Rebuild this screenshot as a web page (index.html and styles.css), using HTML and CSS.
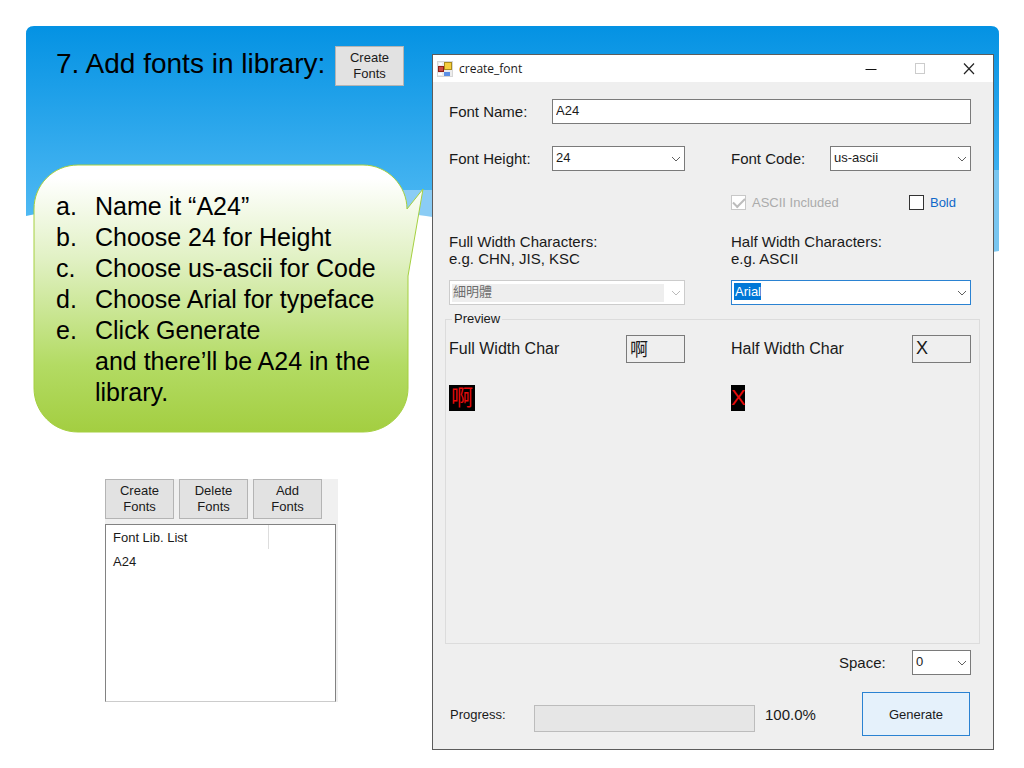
FILE: index.html
```html
<!DOCTYPE html>
<html lang="en">
<head>
<meta charset="utf-8">
<title>Add fonts in library</title>
<link rel="stylesheet" href="styles.css">
</head>
<body>
<main class="slide">
  <svg class="backdrop" viewBox="0 0 974 228" preserveAspectRatio="none" aria-hidden="true">
    <defs>
      <linearGradient id="sky" x1="0" y1="0" x2="0" y2="1">
        <stop offset="0" stop-color="#0492e3"/>
        <stop offset="1" stop-color="#5cc0f6"/>
      </linearGradient>
    </defs>
    <path fill="url(#sky)" d="M9 1H966Q974 1 974 9V226Q880 228 700 215Q480 165 300 165Q120 165 1 191V9Q1 1 9 1Z"/>
    <path fill="#8accf5" d="M374 165H430V196Q400 190 374 188Z"/>
    <path fill="#79c6f0" d="M960 145H974V226L960 228Z"/>
  </svg>

  <section class="notes">
    <header class="heading">
      <h1>7. Add fonts in library:</h1>
      <button class="tool" type="button">Create<br>Fonts</button>
    </header>

    <div class="callout">
      <svg class="bubble" viewBox="0 0 392 269" preserveAspectRatio="none" aria-hidden="true">
        <defs>
          <linearGradient id="leaf" x1="0" y1="0" x2="0" y2="1">
            <stop offset="0.05" stop-color="#ffffff"/>
            <stop offset="0.35" stop-color="#e1f1c4"/>
            <stop offset="0.75" stop-color="#b3db63"/>
            <stop offset="1" stop-color="#a3ce41"/>
          </linearGradient>
        </defs>
        <path fill="url(#leaf)" stroke="#a5d040" d="M45 1H330C355 1 374 22 374 45L390 25L375 112V224C375 248 355 268 330 268H45C20 268 1 248 1 224V45C1 21 20 1 45 1Z"/>
      </svg>
      <ol class="steps">
        <li>Name it “A24”</li>
        <li>Choose 24 for Height</li>
        <li>Choose us-ascii for Code</li>
        <li>Choose Arial for typeface</li>
        <li>Click Generate<br>and there’ll be A24 in the library.</li>
      </ol>
    </div>

    <div class="library">
      <div class="tools">
        <button class="tool" type="button">Create<br>Fonts</button>
        <button class="tool" type="button">Delete<br>Fonts</button>
        <button class="tool" type="button">Add<br>Fonts</button>
      </div>
      <div class="list">
        <table>
          <thead><tr><th scope="col">Font Lib. List</th><td></td></tr></thead>
          <tbody><tr><td>A24</td><td></td></tr></tbody>
        </table>
      </div>
    </div>
  </section>

  <form class="dialog">
    <header class="titlebar">
      <svg class="appicon" viewBox="0 0 16 16" aria-hidden="true">
        <rect x="0.500" y="0.500" width="15" height="15" fill="#ececec" stroke="#d6d6d6"/>
        <rect x="1.500" y="5.500" width="5" height="5" fill="#cc4a42" stroke="#8f1d18"/>
        <rect x="7.500" y="1.500" width="7" height="7" fill="#f6ce3c" stroke="#a98a1c"/>
        <rect x="7" y="11" width="6" height="4" fill="#5b8fe6"/>
        <path d="M1 14H5V12H1ZM2 2H5V4H2Z" fill="#fff"/>
      </svg>
      <h2>create_font</h2>
      <button type="button" class="winbtn" aria-label="Minimize"><svg viewBox="0 0 12 12"><path d="M0.500 6.500H11.500" stroke="#111"/></svg></button>
      <button type="button" class="winbtn" aria-label="Maximize" disabled><svg viewBox="0 0 12 12"><rect x="1.500" y="0.500" width="9" height="10" fill="none" stroke="#ccc"/></svg></button>
      <button type="button" class="winbtn" aria-label="Close"><svg viewBox="0 0 12 12"><path d="M1 0.500L11 11M11 0.500L1 11" stroke="#222" stroke-width="1.200"/></svg></button>
    </header>

    <div class="fields">
      <label for="name">Font Name:</label>
      <input class="box wide" id="name" type="text" value="A24">

      <label for="height">Font Height:</label>
      <span class="combo">
        <select class="box" id="height"><option>24</option></select>
        <svg viewBox="0 0 10 6"><path d="M1 1L5 5L9 1"/></svg>
      </span>
      <label class="second" for="code">Font Code:</label>
      <span class="combo">
        <select class="box" id="code"><option>us-ascii</option></select>
        <svg viewBox="0 0 10 6"><path d="M1 1L5 5L9 1"/></svg>
      </span>
    </div>

    <div class="halves checks">
      <div class="split">
        <label class="check off"><input type="checkbox" checked disabled>ASCII Included</label>
        <label class="check bold"><input type="checkbox">Bold</label>
      </div>
    </div>

    <div class="halves faces">
      <div class="face">
        <label for="full">Full Width Characters:<br>e.g. CHN, JIS, KSC</label>
        <span class="combo muted">
          <select class="box" id="full" disabled><option>細明體</option></select>
          <svg viewBox="0 0 10 6"><path d="M1 1L5 5L9 1"/></svg>
        </span>
      </div>
      <div class="face">
        <label for="half">Half Width Characters:<br>e.g. ASCII</label>
        <span class="combo">
          <input class="box active" id="half" type="text" value="Arial">
          <svg viewBox="0 0 10 6"><path d="M1 1L5 5L9 1"/></svg>
        </span>
      </div>
    </div>

    <fieldset class="preview">
      <legend>Preview</legend>
      <div class="halves">
        <div>
          <div class="split">
            <label for="fullchar">Full Width Char</label>
            <input class="sample" id="fullchar" type="text" value="啊">
          </div>
          <output class="glyph">啊</output>
        </div>
        <div>
          <div class="split">
            <label for="halfchar">Half Width Char</label>
            <input class="sample" id="halfchar" type="text" value="X">
          </div>
          <output class="glyph narrow">X</output>
        </div>
      </div>
    </fieldset>

    <div class="space">
      <label for="space">Space:</label>
      <span class="combo">
        <select class="box" id="space"><option>0</option></select>
        <svg viewBox="0 0 10 6"><path d="M1 1L5 5L9 1"/></svg>
      </span>
    </div>

    <footer class="actions">
      <label for="progress">Progress:</label>
      <progress id="progress" value="0" max="100"></progress>
      <span class="percent">100.0%</span>
      <button class="generate" type="button">Generate</button>
    </footer>
  </form>
</main>
</body>
</html>
```

FILE: styles.css
```css
* { box-sizing: border-box; }

body {
  margin: 0;
  background: #fff;
  color: #1a1a1a;
  font-family: "Liberation Sans", Arial, "Noto Sans CJK TC", sans-serif;
  font-size: 13px;
}

h1, h2 { margin: 0; font-weight: normal; }

input, select, button { font: inherit; color: inherit; }

.slide {
  position: relative;
  display: grid;
  grid-template-columns: 375fr 562fr;
  column-gap: 24px;
  min-height: 100vh;
  padding: 54px 30px 18px 33px;
}

.backdrop {
  position: absolute;
  top: 25px;
  left: 25px;
  width: calc(100% - 50px);
  height: 228px;
}

.notes { position: relative; margin-top: -8px; }

.heading {
  display: flex;
  align-items: flex-start;
  justify-content: space-between;
  height: 118px;
  padding: 0 4px 0 23px;
}

.heading h1 {
  color: #000;
  font-size: 28px;
  line-height: 36px;
  white-space: nowrap;
}

.tool {
  width: 69px;
  height: 40px;
  padding: 0;
  border: 1px solid #b4b4b4;
  background: #e2e2e2;
  line-height: 16px;
}

.callout { position: relative; padding: 27px 16px 25px 23px; }

.bubble {
  position: absolute;
  inset: 0;
  width: calc(100% + 17px);
  height: 100%;
}

.steps {
  position: relative;
  margin: 0;
  padding: 0;
  list-style: none;
  counter-reset: step;
  color: #000;
  font-size: 25px;
  line-height: 31px;
}

.steps li {
  padding-left: 39px;
  counter-increment: step;
}

.steps li::before {
  content: counter(step, lower-alpha) ".";
  float: left;
  margin-left: -39px;
}

.library {
  width: 233px;
  margin: 46px 0 0 72px;
  background: #f0f0f0;
}

.tools { display: flex; gap: 5px; height: 45px; }

.list {
  height: 178px;
  margin-right: 2px;
  border: 1px solid #828282;
  border-bottom-color: #ccc;
  background: #fff;
}

.list table { width: 100%; border-collapse: collapse; }
.list th, .list td { height: 24px; padding: 2px 7px; font-weight: normal; text-align: left; }
.list th { width: 162px; border-right: 1px solid #ddd; }

.dialog {
  position: relative;
  display: flex;
  flex-direction: column;
  border: 1px solid #5c5c5c;
  background: #efefef;
  font-size: 15px;
}

.titlebar {
  display: flex;
  align-items: center;
  height: 27px;
  padding-left: 4px;
  background: #fff;
}

.appicon { width: 16px; height: 16px; }
.titlebar h2 { flex: 1; margin-left: 6px; font: 12px "Open Sans", sans-serif; }

.winbtn {
  display: grid;
  place-items: center;
  width: 49px;
  height: 27px;
  padding: 0;
  border: 0;
  background: none;
}

.winbtn svg { width: 12px; height: 12px; }

.fields {
  display: grid;
  grid-template-columns: 103px 133fr 145px 141fr;
  row-gap: 22px;
  align-items: center;
  padding: 17px 22px 0 16px;
}

.wide { grid-column: 2 / -1; }
.second { padding-left: 46px; }

.box {
  width: 100%;
  height: 25px;
  padding: 0 3px 2px;
  border: 1px solid #7a7a7a;
  border-radius: 0;
  outline: 0;
  appearance: none;
  background: #fff;
  font-size: 13px;
}

.combo { display: grid; align-items: center; }
.combo > * { grid-area: 1 / 1; }
.combo svg {
  justify-self: end;
  width: 10px;
  height: 6px;
  margin-right: 4px;
  fill: none;
  stroke: #606060;
  pointer-events: none;
}

.muted svg { stroke: #bbb; }
.muted .box {
  border-color: #ccc;
  background: linear-gradient(#eee, #eee) no-repeat 2px 3px / calc(100% - 22px) 18px #fff;
  color: #6d6d6d;
  opacity: 1;
}

.active {
  border-color: #2a82d2;
  background: linear-gradient(#0078d7, #0078d7) no-repeat 2px 2px / 27px 17px #fff;
  color: #fff;
}

.halves {
  display: grid;
  grid-template-columns: 236fr 240fr;
  column-gap: 46px;
  padding: 0 22px 0 16px;
}

.split { display: flex; align-items: center; justify-content: space-between; }

.checks { margin-top: 23px; font-size: 13px; }
.checks .split { grid-column: 2; padding-right: 15px; }

.check { display: flex; align-items: center; gap: 6px; line-height: 17px; }
.check input {
  width: 15px;
  height: 15px;
  margin: 0;
  border: 1px solid #333;
  appearance: none;
  background: #fff;
}
.off { color: #ababab; }
.off input {
  display: grid;
  place-items: center;
  border-color: #c8c8c8;
}
.off input::before {
  content: "";
  width: 10px;
  height: 5px;
  margin-bottom: 3px;
  border: solid #bdbdbd;
  border-width: 0 0 2px 2px;
  rotate: -45deg;
}
.bold { color: #1068c9; }

.faces { margin-top: 22px; line-height: 17px; }
.face { display: grid; row-gap: 13px; }

.preview {
  flex: 1;
  min-width: 0;
  margin: 6px 13px 0 12px;
  padding: 0;
  border: 1px solid #dcdcdc;
}

.preview legend { margin-left: 6px; padding: 0 2px; font-size: 13px; line-height: 16px; }
.preview .halves { padding: 8px 8px 0 3px; font-size: 16px; }

.sample {
  width: 59px;
  height: 28px;
  padding: 0 3px 2px;
  border: 1px solid #7a7a7a;
  background: #efefef;
  font-size: 18px;
}

.glyph {
  display: grid;
  place-items: center;
  width: 26px;
  height: 26px;
  margin-top: 22px;
  background: #000;
  color: #e80b0b;
  font-size: 22px;
  line-height: 26px;
}
.narrow { width: 14px; }

.space {
  display: grid;
  grid-template-columns: 47px 59px;
  justify-content: end;
  align-items: center;
  gap: 26px;
  margin: 6px 22px 0;
}

.actions {
  display: grid;
  grid-template-columns: 84px 1fr 107px 108px;
  align-items: center;
  margin: 17px 23px 13px 17px;
  font-size: 13px;
}

.actions progress {
  width: 100%;
  height: 27px;
  margin-top: 8px;
  border: 1px solid #bcbcbc;
  appearance: none;
  background: #e6e6e6;
}
.actions progress::-webkit-progress-bar { background: #e6e6e6; }

.percent { padding-left: 10px; font-size: 15px; }

.generate {
  height: 44px;
  border: 1px solid #2a82d2;
  background: #e5f1fb;
}
```
